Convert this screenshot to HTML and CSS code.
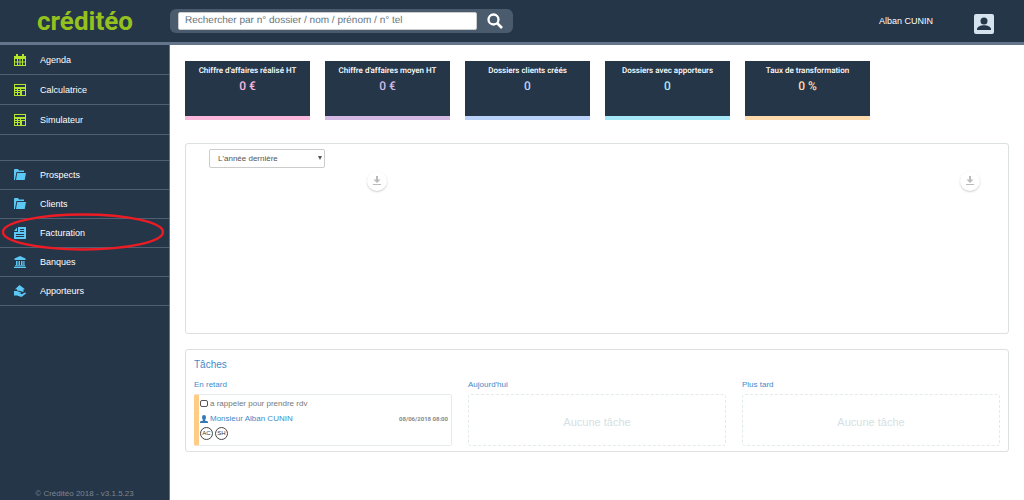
FILE: index.html
```html
<!DOCTYPE html>
<html lang="fr">
<head>
<meta charset="utf-8">
<meta name="viewport" content="width=device-width, initial-scale=1">
<title>Créditéo</title>
<link rel="stylesheet" href="styles.css">
</head>
<body>
<svg class="symbols" aria-hidden="true">
  <symbol id="i-calc" viewBox="0 0 12 12"><path fill="currentColor" fill-rule="evenodd" d="M0 0h12v12H0zM1 1v2h10V1zM1 5v1h2V5zM4 5v1h2V5zM7 5v1h4V5zM1 7v1h2V7zM4 7v1h2V7zM1 9v2h2V9zM4 9v2h2V9zM8 7v4h3V7z"/></symbol>
  <symbol id="i-folder" viewBox="0 0 12 12"><path fill="currentColor" d="M0 1q0-1 1-1h3l1 1.500h5V3H2.500L1.200 9.500 1 11H0zM3.200 4H12l-1.300 7H2z"/></symbol>
  <symbol id="i-download" viewBox="0 0 8 10"><path fill="currentColor" d="M3 0h2v3.500h2.500L4 7 .5 3.500H3zM0 8h8v1H0z"/></symbol>
</svg>
<header class="topbar">
  <a class="logo" href="#">créditéo</a>
  <form class="search" role="search">
    <input class="search-input" type="text" aria-label="Rechercher" placeholder="Rechercher par n° dossier / nom / prénom / n° tel">
    <button class="search-button" type="button" aria-label="Lancer la recherche">
      <svg width="16" height="16" viewBox="0 0 16 16"><circle cx="6.500" cy="6.500" r="5" fill="none" stroke="#fff" stroke-width="2.300"/><path d="M10 10l5 5" stroke="#fff" stroke-width="2.600"/></svg>
    </button>
  </form>
  <div class="account">
    <span>Alban CUNIN</span>
    <button class="profile" type="button" aria-label="Profil">
      <svg width="20" height="20" viewBox="0 0 20 20"><rect width="20" height="20" rx="2" fill="#d5e3ee"/><circle cx="10" cy="7" r="3.500" fill="#253649"/><path d="M3 16v-1c0-2.500 4-3.800 7-3.800s7 1.300 7 3.800v1z" fill="#253649"/></svg>
    </button>
  </div>
</header>
<div class="layout">
  <aside class="sidebar">
    <nav>
      <ul class="menu menu-tools">
        <li><a class="menu-link" href="#"><svg class="icon" viewBox="0 0 12 12"><path fill="currentColor" fill-rule="evenodd" d="M0 2h2V0h2v2h4V0h2v2h2v10H0zM1 5v6h10V5z"/><path stroke="currentColor" d="M3.500 5v6M6 5v6M8.500 5v6M1 8h10"/></svg>Agenda</a></li>
        <li><a class="menu-link" href="#"><svg class="icon"><use href="#i-calc"/></svg>Calculatrice</a></li>
        <li><a class="menu-link" href="#"><svg class="icon"><use href="#i-calc"/></svg>Simulateur</a></li>
      </ul>
      <ul class="menu menu-files">
        <li><a class="menu-link" href="#"><svg class="icon"><use href="#i-folder"/></svg>Prospects</a></li>
        <li><a class="menu-link" href="#"><svg class="icon"><use href="#i-folder"/></svg>Clients</a></li>
        <li class="highlighted"><a class="menu-link" href="#"><svg class="icon" viewBox="0 0 12 12"><path fill="currentColor" fill-rule="evenodd" d="M4 0h8v12H0V5h4zM0 4l3-3.500V4zM6 2v1h4V2zM6 4v1h4V4zM2 7v1h8V7zM2 9v1h8V9z"/></svg>Facturation</a>
          <svg class="ring" viewBox="0 0 162 38" preserveAspectRatio="none" aria-hidden="true"><ellipse cx="81" cy="19" rx="80" ry="17.500" fill="none" stroke="#ed1c24" stroke-width="2.400"/></svg></li>
        <li><a class="menu-link" href="#"><svg class="icon" viewBox="0 0 12 12"><path fill="currentColor" d="M6 0l5.500 2.500V4H.5V2.500zM2 5h1.500v4H2zM4.500 5H6v4H4.500zM7 5h1.500v4H7zM9.300 5h1.200v4H9.300zM1 9.300h10v1H1zM0 10.800h12V12H0z"/></svg>Banques</a></li>
        <li><a class="menu-link" href="#"><svg class="icon" viewBox="0 0 12 12"><path fill="currentColor" d="M5.500 0L11 4.300H9.500V7L6 6 3 5.500V4.300H1zM0 6h3l4 1.500v1L5 8.300l2.500 1L11 7.500q1 0 1 1L7.500 12 3 10.500H0z"/></svg>Apporteurs</a></li>
      </ul>
    </nav>
    <p class="version">© Créditéo 2018 - v3.1.5.23</p>
  </aside>
  <main class="content">
    <section class="stats" aria-label="Indicateurs">
      <article class="stat pink"><h2>Chiffre d'affaires réalisé HT</h2><p>0 €</p></article>
      <article class="stat purple"><h2>Chiffre d'affaires moyen HT</h2><p>0 €</p></article>
      <article class="stat blue"><h2>Dossiers clients créés</h2><p>0</p></article>
      <article class="stat cyan"><h2>Dossiers avec apporteurs</h2><p>0</p></article>
      <article class="stat orange"><h2>Taux de transformation</h2><p>0 %</p></article>
    </section>
    <section class="panel charts">
      <div class="period">
        <select class="period-select" aria-label="Période"><option>L'année dernière</option></select>
        <svg class="caret" width="4" height="4" viewBox="0 0 5 5" aria-hidden="true"><path d="M0 0h5L2.500 5z" fill="#555"/></svg>
      </div>
      <div class="chart-actions">
        <button class="download" type="button" aria-label="Télécharger le premier graphique"><svg width="8" height="10"><use href="#i-download"/></svg></button>
        <button class="download" type="button" aria-label="Télécharger le second graphique"><svg width="8" height="10"><use href="#i-download"/></svg></button>
      </div>
    </section>
    <section class="panel tasks">
      <h2 class="tasks-title">Tâches</h2>
      <div class="columns">
        <section class="column">
          <h3>En retard</h3>
          <article class="task">
            <label class="task-row"><input class="check" type="checkbox">a rappeler pour prendre rdv</label>
            <div class="task-row">
              <a class="person" href="#"><svg width="8" height="8" viewBox="0 0 8 8"><path fill="currentColor" d="M2 2a2 2 0 0 1 4 0q0 2-1 3v.5l3 1V8H0V6.500l3-1V5Q2 4 2 2z"/></svg>Monsieur Alban CUNIN</a>
              <time datetime="2018-06-08T08:00">08/06/2018 08:00</time>
            </div>
            <div class="badges"><span class="badge">AC</span><span class="badge">SH</span></div>
          </article>
        </section>
        <section class="column"><h3>Aujourd'hui</h3><p class="empty">Aucune tâche</p></section>
        <section class="column"><h3>Plus tard</h3><p class="empty">Aucune tâche</p></section>
      </div>
    </section>
  </main>
</div>
</body>
</html>
```
FILE: styles.css
```css
* { box-sizing: border-box; }
body {
  margin: 0;
  min-height: 100vh;
  display: flex;
  flex-direction: column;
  font-family: "Liberation Sans", Arial, sans-serif;
  font-size: 9px;
  line-height: 12px;
  background: #fff;
}
h2, h3, p, ul { margin: 0; padding: 0; font-weight: normal; }
a { text-decoration: none; }
button { padding: 0; border: 0; background: none; cursor: pointer; }
svg { display: block; flex: none; }
.symbols { position: absolute; width: 0; height: 0; }

.topbar {
  display: flex;
  align-items: center;
  height: 45px;
  padding-right: 30px;
  background: #253649;
  border-bottom: 3px solid #64758b;
}
.logo {
  width: 170px;
  text-align: center;
  font: bold 26px/40px Roboto, sans-serif;
  color: #95c11f;
}
.search {
  display: flex;
  width: 343px;
  height: 24px;
  padding: 3px 0 3px 8px;
  border-radius: 6px;
  background: #4b5b6e;
}
.search-input {
  flex: 1;
  min-width: 0;
  padding: 0 6px;
  border: 1px solid #ccc;
  border-radius: 2px;
  font: 10px/16px "Liberation Sans", Arial, sans-serif;
  color: #555;
  background: #fff;
  text-rendering: geometricPrecision;
}
.search-input::placeholder { color: #66757f; opacity: 1; }
.search-button { width: 36px; display: grid; place-items: center; }
.account {
  display: flex;
  align-items: center;
  gap: 41px;
  margin-left: auto;
  color: #fff;
}
.profile { margin-top: 6px; }

.layout { display: flex; flex: 1; }
.sidebar {
  display: flex;
  flex-direction: column;
  justify-content: space-between;
  width: 170px;
  background: #253649;
  border-right: 1px solid #64758b;
}
.menu { list-style: none; }
.menu li { position: relative; border-bottom: 1px solid #4f6073; }
.menu-link {
  display: flex;
  align-items: center;
  gap: 14px;
  height: 29px;
  padding-left: 14px;
  color: #fff;
}
.icon { width: 12px; height: 12px; }
.menu-tools .icon { color: #b5e62e; }
.menu-files { margin-top: 25px; border-top: 1px solid #4f6073; }
.menu-files .menu-link { height: 28px; }
.menu-files .icon { color: #5bc8f5; }
.ring {
  position: absolute;
  top: -6px;
  left: 2px;
  width: 162px;
  height: 38px;
  pointer-events: none;
}
.version { font-size: 8px; text-align: center; color: #7b8590; }

.content { flex: 1; min-width: 0; padding: 16px 15px; }
.stats { display: flex; gap: 15px; margin-bottom: 23px; }
.stat {
  flex: 0 1 125px;
  min-height: 59px;
  padding-top: 4px;
  border-bottom: 4px solid currentColor;
  background: #253649;
  text-align: center;
  font-family: Roboto, sans-serif;
  text-rendering: geometricPrecision;
}
.stat h2 { font-size: 8px; font-weight: 500; color: #fff; white-space: nowrap; }
.stat p { font-size: 12px; line-height: 18px; font-weight: 500; }
.pink { color: #fbb8dc; }
.purple { color: #d5b9e5; }
.blue { color: #b9d2fa; }
.cyan { color: #a5e8f8; }
.orange { color: #ffdbab; }

.panel { border: 1px solid #dce0e1; border-radius: 3px; }
.charts { min-height: 191px; margin-bottom: 15px; padding: 5px 28px 5px 23px; }
.period { position: relative; width: 116px; }
.period-select {
  appearance: none;
  display: block;
  width: 100%;
  height: 19px;
  padding: 0 8px;
  border: 1px solid #ccc;
  border-radius: 2px;
  background: #fff;
  font: 8px/16px "Liberation Sans", Arial, sans-serif;
  color: #555;
}
.caret { position: absolute; top: 7px; right: 3px; pointer-events: none; }
.chart-actions { display: flex; justify-content: space-between; margin: 3px 0 0 158px; }
.download {
  display: grid;
  place-items: center;
  width: 20px;
  height: 20px;
  border-radius: 50%;
  color: #bbb;
  box-shadow: 0 1px 2px #ccc;
}

.tasks { padding: 9px 8px 5px; color: #428bca; }
.tasks-title { font-size: 10px; }
.columns { display: grid; grid-template-columns: repeat(3, 1fr); gap: 16px; margin-top: 8px; }
.column { display: flex; flex-direction: column; }
.column h3 { margin-bottom: 3px; font-size: 8px; }
.task {
  flex: 1;
  padding: 1px 3px 2px 1px;
  border: 1px solid #e5eaec;
  border-left: 5px solid #ffcc85;
  border-radius: 2px;
}
.task-row {
  display: flex;
  align-items: center;
  gap: 2px;
  height: 15px;
  font-size: 8px;
  color: #777;
}
.check {
  appearance: none;
  width: 8px;
  height: 7px;
  margin: 0;
  border: 1px solid #555;
  border-radius: 2px;
}
.person { display: flex; align-items: center; gap: 2px; color: #428bca; }
.person svg { color: #337ab7; }
.task time { margin-left: auto; font: bold 6px/12px Roboto, sans-serif; color: #888; }
.badges { display: flex; gap: 2px; margin-top: 1px; }
.badge {
  width: 13px;
  height: 13px;
  border: 1px solid #444;
  border-radius: 50%;
  text-align: center;
  font-size: 6px;
  line-height: 11px;
  color: #333;
}
.empty {
  flex: 1;
  display: grid;
  place-items: center;
  min-height: 52px;
  padding-top: 4px;
  border: 1px dashed #e3eaed;
  border-radius: 3px;
  font-size: 11px;
  color: #d5dfe4;
}
```
